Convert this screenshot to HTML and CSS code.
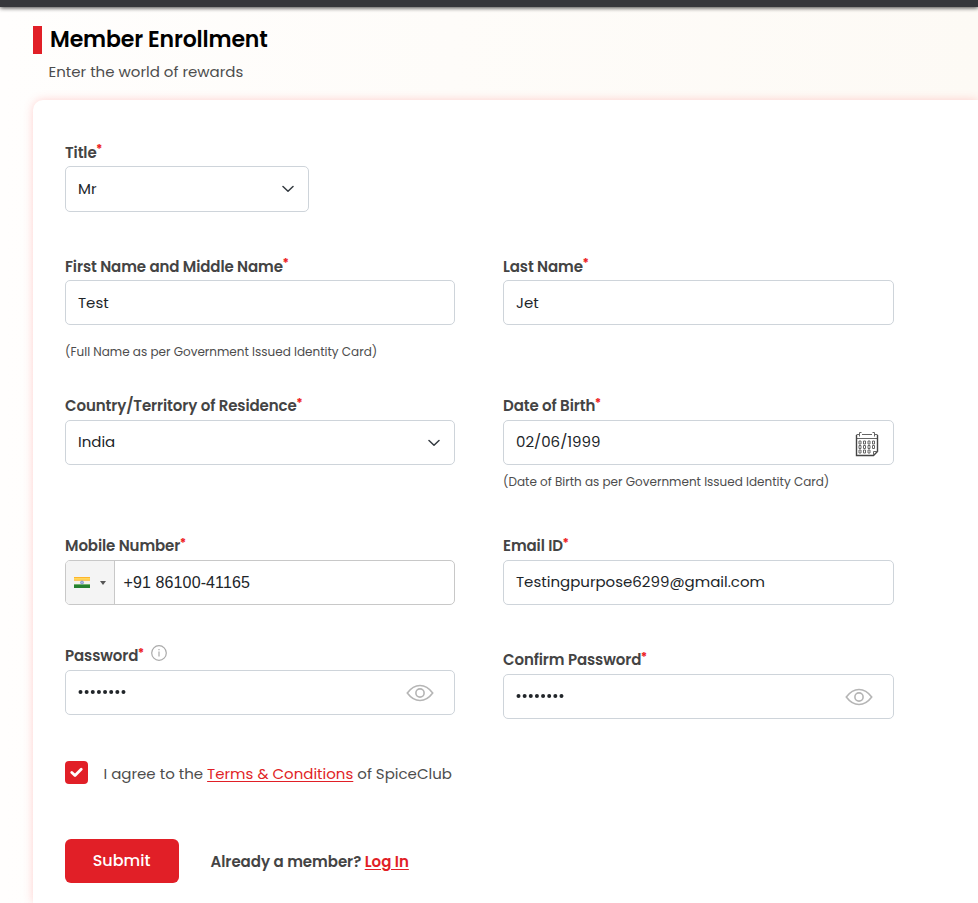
FILE: index.html
```html
<!DOCTYPE html>
<html lang="en">
<head>
<meta charset="utf-8">
<title>Member Enrollment</title>
<link rel="stylesheet" href="styles.css">
</head>
<body>
<div class="topbar"></div>
<header class="heading">
  <h1>Member Enrollment</h1>
  <p>Enter the world of rewards</p>
</header>
<main class="card">
  <section class="row row-title">
    <div class="field">
      <div class="label">Title<sup>*</sup></div>
      <div class="box box-title">Mr
        <svg class="chevron" width="12" height="8" viewBox="0 0 12 8"><path d="M1 1.500 6 6.200 11 1.500"/></svg>
      </div>
    </div>
  </section>
  <section class="row row-tall">
    <div class="field">
      <div class="label">First Name and Middle Name<sup>*</sup></div>
      <div class="box box-name">Test</div>
      <div class="hint hint-name">(Full Name as per Government Issued Identity Card)</div>
    </div>
    <div class="field">
      <div class="label">Last Name<sup>*</sup></div>
      <div class="box box-name">Jet</div>
    </div>
  </section>
  <section class="row row-tall">
    <div class="field">
      <div class="label label-raised">Country/Territory of Residence<sup>*</sup></div>
      <div class="box">India
        <svg class="chevron" width="12" height="8" viewBox="0 0 12 8"><path d="M1 1.500 6 6.200 11 1.500"/></svg>
      </div>
    </div>
    <div class="field">
      <div class="label label-raised">Date of Birth<sup>*</sup></div>
      <div class="box">02/06/1999
        <svg class="calendar" width="24" height="26" viewBox="0 0 24 26">
          <path class="cal-line" d="M1.500 3.500h3M7 3.500h10M19.500 3.500h3M1.500 7.500h21"/>
          <path class="cal-heavy" d="M1.500 4v20.500h17l4-4V4"/>
          <path class="cal-line" d="M4.500 5.500V1.500h2M17.500 1.500h2v4M18.500 24v-3.500h4"/>
          <g class="cal-days">
            <path d="M4 10h2v3H4zM8.500 10h2v3h-2zM13 10h2v3h-2zM17.500 10h2v3h-2zM4 14.500h2v3H4zM8.500 14.500h2v3h-2zM13 14.500h2v3h-2zM17.500 14.500h2v3h-2zM4 19h2v3H4zM8.500 19h2v3h-2zM13 19h2v3h-2z"/>
          </g>
        </svg>
      </div>
      <div class="hint hint-dob">(Date of Birth as per Government Issued Identity Card)</div>
    </div>
  </section>
  <section class="row row-contact">
    <div class="field">
      <div class="label label-raised">Mobile Number<sup>*</sup></div>
      <div class="box box-phone">
        <div class="country-code">
          <svg width="16" height="11" viewBox="0 0 16 11">
            <path fill="#ffb52b" d="M0 0h16v4H0z"/><path fill="#f5f3ec" d="M0 3.700h16v4H0z"/><path fill="#26812f" d="M0 7.300h16V11H0z"/>
            <path fill="#ffd75e" d="M0 1h16v1.800H0z"/><path fill="#72b56c" d="M0 7h16v1H0z"/><circle cx="8" cy="5.500" r="1.500" fill="#a9b9df" stroke="#7189c6" stroke-width=".7"/>
          </svg>
          <span class="caret"></span>
        </div>
        <span class="phone">+91 86100-41165</span>
      </div>
    </div>
    <div class="field">
      <div class="label label-raised">Email ID<sup>*</sup></div>
      <div class="box">Testingpurpose6299@gmail.com</div>
    </div>
  </section>
  <section class="row row-password">
    <div class="field">
      <div class="label label-raised">Password<sup>*</sup>
        <svg class="info" width="16" height="16" viewBox="0 0 16 16"><circle cx="8" cy="8" r="7.300"/><path d="M8 6.500v5M8 4v1.300"/></svg>
      </div>
      <div class="box"><svg class="dots" width="49" height="6" viewBox="0 0 49 6"><path d="M2.500 3h43.500"/></svg>
        <svg class="eye" width="28" height="18" viewBox="0 0 28 18"><path d="M1.300 9C5 4 9 1.500 14 1.500S23 4 26.700 9C23 14 19 16.500 14 16.500S5 14 1.300 9Z"/><circle cx="14" cy="9" r="4.100"/></svg>
      </div>
    </div>
    <div class="field field-confirm">
      <div class="label label-raised">Confirm Password<sup>*</sup></div>
      <div class="box"><svg class="dots" width="49" height="6" viewBox="0 0 49 6"><path d="M2.500 3h43.500"/></svg>
        <svg class="eye" width="28" height="18" viewBox="0 0 28 18"><path d="M1.300 9C5 4 9 1.500 14 1.500S23 4 26.700 9C23 14 19 16.500 14 16.500S5 14 1.300 9Z"/><circle cx="14" cy="9" r="4.100"/></svg>
      </div>
    </div>
  </section>
  <div class="agree">
    <span class="check"><svg width="13" height="11" viewBox="0 0 13 11"><path d="M1.800 5.500 5 8.500 11.200 2.300"/></svg></span>
    <span class="agree-text">I agree to the <a href="#">Terms &amp; Conditions</a> of SpiceClub</span>
  </div>
  <div class="actions">
    <button type="button">Submit</button>
    <span class="member">Already a member? <a href="#">Log In</a></span>
  </div>
</main>
</body>
</html>
```
FILE: styles.css
```css
* { box-sizing: border-box; }
body {
  margin: 0;
  background: linear-gradient(90deg, #fffefd 0, #fefcf9 450px, #fdfaf5 978px);
  font-family: Poppins, Inter, sans-serif;
  font-size: 15px;
  font-weight: 400;
  color: #4d4d4d;
}
svg { display: block; flex: none; fill: none; }
.topbar { height: 7px; background: #36373b; box-shadow: 0 1px 4px rgba(0, 0, 0, .75); }
.heading { height: 93px; padding: 19px 0 0 33px; }
h1 {
  display: flex;
  align-items: center;
  height: 28px;
  margin: 0;
  padding: 0 0 1px 8px;
  border-left: 9px solid #e11f27;
  font-size: 22px;
  font-weight: 600;
  letter-spacing: -.15px;
  color: #000;
  white-space: nowrap;
}
.heading p { margin: 6px 0 0 15.500px; line-height: 24px; white-space: nowrap; }
.card {
  height: 803px;
  margin-left: 33px;
  padding: 40px 0 0 32px;
  background: #fff;
  border-radius: 10px 0 0 0;
  box-shadow: 0 0 10px rgba(255, 80, 80, .26);
}
.row { display: grid; grid-template-columns: 390px 391px; column-gap: 48px; }
.row-title { height: 114px; }
.row-tall { height: 140px; }
.row-contact { height: 110px; }
.row-password { height: 117px; }
.field-confirm { padding-top: 4px; }
.label {
  display: flex;
  height: 24px;
  margin-bottom: 2px;
  line-height: 26px;
  font-size: 15px;
  font-weight: 600;
  letter-spacing: -.1px;
  color: #444;
  white-space: nowrap;
}
.label-raised { line-height: 24px; }
sup { margin-left: -.5px; font-size: 12px; font-weight: 700; line-height: 17px; vertical-align: baseline; color: #ed1c24; }
.box {
  display: flex;
  align-items: center;
  justify-content: space-between;
  height: 45px;
  padding: 0 14px 2px 12px;
  border: 1px solid #ced4da;
  border-radius: 5px;
  background: #fff;
  color: #212529;
  white-space: nowrap;
}
.box-title { width: 244px; height: 46px; }
.box-name { padding-bottom: 0; }
.chevron { position: relative; top: 1px; stroke: #343a40; stroke-width: 1.500; stroke-linecap: round; stroke-linejoin: round; }
.hint { line-height: 20px; font-size: 12px; white-space: nowrap; }
.hint-name { margin-top: 17px; }
.hint-dob { margin-top: 7px; }
.calendar { margin-top: 5px; }
.cal-line { stroke: #666; stroke-width: 1; }
.cal-heavy { stroke: #444; stroke-width: 1.400; }
.cal-days { stroke: #666; stroke-width: 1; }
.box-phone { justify-content: flex-start; padding: 0; border-color: #c8c8c8; }
.country-code {
  display: flex;
  align-items: center;
  gap: 10px;
  width: 49px;
  height: 100%;
  padding-left: 8px;
  border-right: 1px solid #c8c8c8;
  border-radius: 4px 0 0 4px;
  background: #f4f4f4;
}
.caret { border: 3px solid transparent; border-top: 4px solid #555; border-bottom: 0; }
.phone { margin-left: 8.500px; font-family: "Liberation Sans", sans-serif; font-size: 16px; letter-spacing: .12px; }
.info { margin: 1px 0 0 7px; stroke: #aaa; stroke-width: 1.200; }
.dots { margin-top: 1px; stroke: #212529; stroke-width: 4; stroke-linecap: round; stroke-dasharray: 0 6.140; }
.eye { margin: 2px 6px 0 0; stroke: #b5b5b5; stroke-width: 1.600; }
a { color: #e11f27; text-decoration: underline; text-underline-offset: 2px; text-decoration-thickness: 1px; }
.agree { display: flex; align-items: center; gap: 15.500px; height: 23px; white-space: nowrap; }
.agree-text { padding-top: 2px; }
.check { display: grid; place-items: center; width: 23px; height: 23px; border-radius: 4px; background: #e11f27; }
.check svg { stroke: #fff; stroke-width: 2.800; stroke-linecap: round; stroke-linejoin: round; }
.actions { display: flex; align-items: center; margin-top: 55px; height: 44px; white-space: nowrap; }
.member { font-weight: 600; letter-spacing: -.03px; color: #444; }
button {
  width: 114px;
  height: 44px;
  margin-right: 31.500px;
  padding: 0 1px 2px 0;
  border: 0;
  border-radius: 6px;
  background: #e11f27;
  color: #fff;
  font: 500 16px Poppins, Inter, sans-serif;
}
```
